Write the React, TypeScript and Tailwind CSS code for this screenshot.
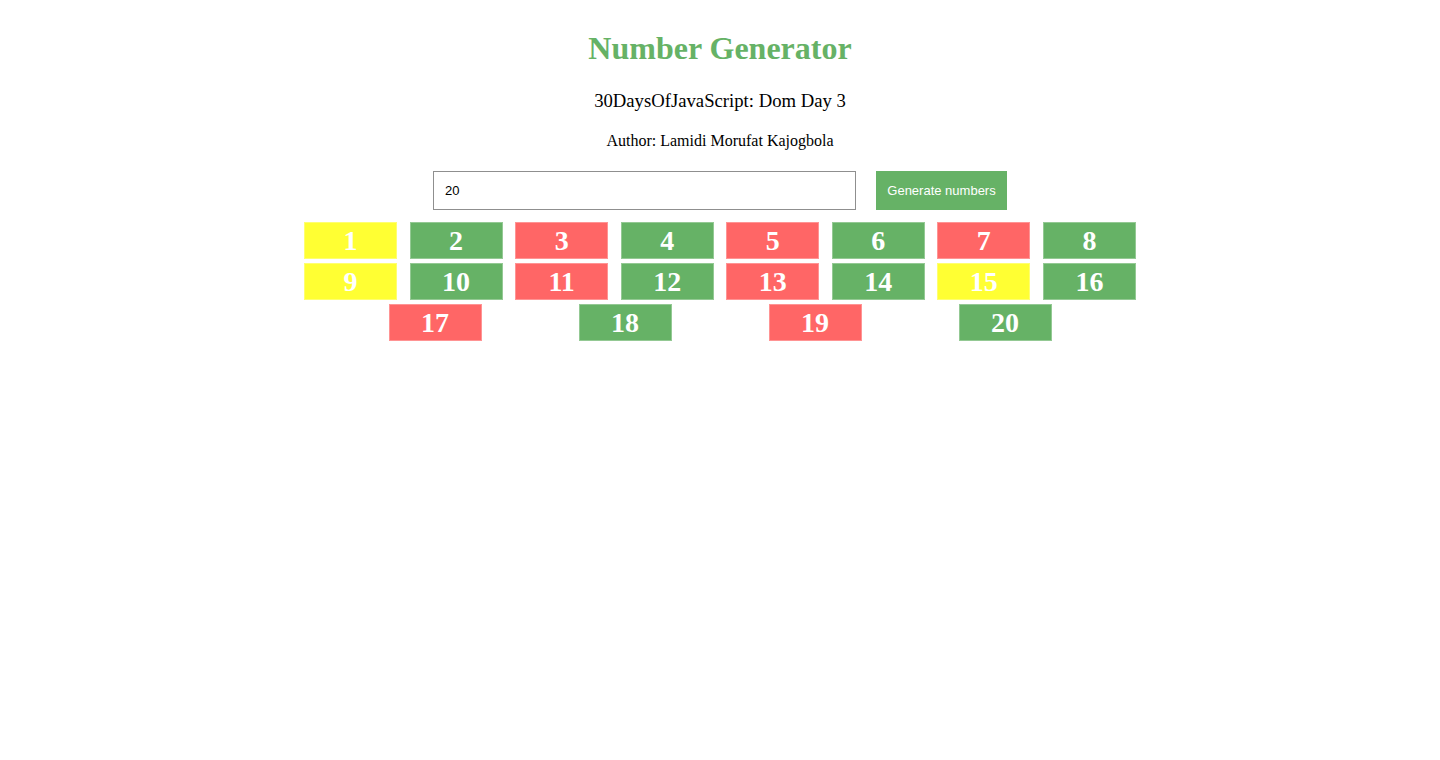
import React from 'react';

const isPrime = (n: number) => {
  if (n < 2) return false;
  for (let i = 2; i * i <= n; i++) if (n % i === 0) return false;
  return true;
};

// even first, so 2 stays green like the others
const colorFor = (n: number) => {
  if (n % 2 === 0) return 'bg-[#66b266]';
  if (isPrime(n)) return 'bg-[#ff6666]';
  return 'bg-[#ffff33]';
};

export default function App() {
  const numbers = Array.from({ length: 20 }, (_, i) => i + 1);

  return (
    <div className="min-h-[760px] bg-white font-['Liberation_Serif',serif] text-black">
      <div className="flex flex-col items-center pt-[29px]">
        <h1 className="text-[32px] font-bold leading-[38px] text-[#66b266]">Number Generator</h1>
        <h2 className="mt-[23px] text-[18.7px] leading-[22px]">30DaysOfJavaScript: Dom Day 3</h2>
        <p className="mt-[20px] text-[16px] leading-[18px]">Author: Lamidi Morufat Kajogbola</p>

        <div className="mt-[21px] flex items-center gap-[20px]">
          <input
            defaultValue="20"
            className="h-[39px] w-[423px] border border-[#8f8f8f] px-[11px] font-['Liberation_Sans',sans-serif] text-[13px] outline-none"
          />
          <button className="h-[39px] w-[131px] bg-[#66b266] font-['Liberation_Sans',sans-serif] text-[13px] text-white">
            Generate numbers
          </button>
        </div>

        <div className="mt-[10px] flex w-[853px] flex-wrap justify-evenly">
          {numbers.map((n) => (
            <div
              key={n}
              className={`m-[2px] flex h-[37px] w-[93px] items-center justify-center border border-white/30 text-[28px] font-bold leading-none text-white ${colorFor(n)}`}
            >
              {n}
            </div>
          ))}
        </div>
      </div>
    </div>
  );
}
